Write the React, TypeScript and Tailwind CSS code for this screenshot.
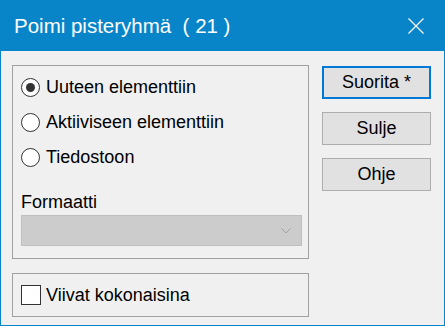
import React from "react";

const FONT = { fontFamily: '"Liberation Sans", Arial, sans-serif' };

function Radio({ label, checked }: { label: string; checked?: boolean }) {
  return (
    <div className="flex items-center h-[20px]">
      <span className="flex h-[19px] w-[19px] items-center justify-center rounded-full border border-[#333] bg-white">
        {checked && <span className="h-[9px] w-[9px] rounded-full bg-[#333]" />}
      </span>
      <span className="ml-[6px] text-[18px] leading-none text-black">{label}</span>
    </div>
  );
}

function Painike({ label, oletus }: { label: string; oletus?: boolean }) {
  return (
    <div
      className={
        "flex h-[33px] w-[109px] items-center justify-center bg-[#e1e1e1] text-[18px] text-black " +
        (oletus ? "border-2 border-[#0078d7]" : "border border-[#adadad]")
      }
    >
      {label}
    </div>
  );
}

export default function App() {
  return (
    <div style={FONT} className="flex h-[326px] w-[445px] flex-col border border-[#0885c8] bg-[#f0f0f0]">
      {/* otsikkopalkki */}
      <div className="flex h-[50px] shrink-0 items-center justify-between bg-[#0885c8] pl-[13px] pr-[20px]">
        <span className="text-[20.5px] text-white">Poimi pisteryhmä&nbsp; ( 21 )</span>
        <svg width="16" height="16" viewBox="0 0 16 16">
          <path d="M0.5 0.5 L15.5 15.5 M15.5 0.5 L0.5 15.5" stroke="white" strokeWidth="1.2" />
        </svg>
      </div>

      <div className="flex flex-1 pl-[11px] pt-[14px]">
        <div className="flex w-[297px] flex-col">
          <div className="flex h-[194px] flex-col border border-[#a0a0a0] px-[8px] pt-[11px]">
            <div className="flex flex-col gap-[15px]">
              <Radio label="Uuteen elementtiin" checked />
              <Radio label="Aktiiviseen elementtiin" />
              <Radio label="Tiedostoon" />
            </div>
            <div className="mt-[26px] text-[18px] leading-[19px] text-black">Formaatti</div>
            <div className="mt-[3px] flex h-[31px] w-[281px] items-center justify-end border border-[#bfbfbf] bg-[#cccccc] pr-[10px]">
              <svg width="10" height="6" viewBox="0 0 10 6">
                <path d="M0.5 0.5 L5 5 L9.5 0.5" fill="none" stroke="#a0a0a0" strokeWidth="1" />
              </svg>
            </div>
          </div>
          <div className="mt-[14px] flex h-[44px] items-center border border-[#a0a0a0] px-[8px]">
            <span className="h-[20px] w-[20px] border border-[#333] bg-white" />
            <span className="ml-[5px] text-[18px] leading-none text-black">Viivat kokonaisina</span>
          </div>
        </div>

        <div className="ml-[13px] flex flex-col gap-[13px] pt-[1px]">
          <Painike label="Suorita *" oletus />
          <Painike label="Sulje" />
          <Painike label="Ohje" />
        </div>
      </div>
    </div>
  );
}
